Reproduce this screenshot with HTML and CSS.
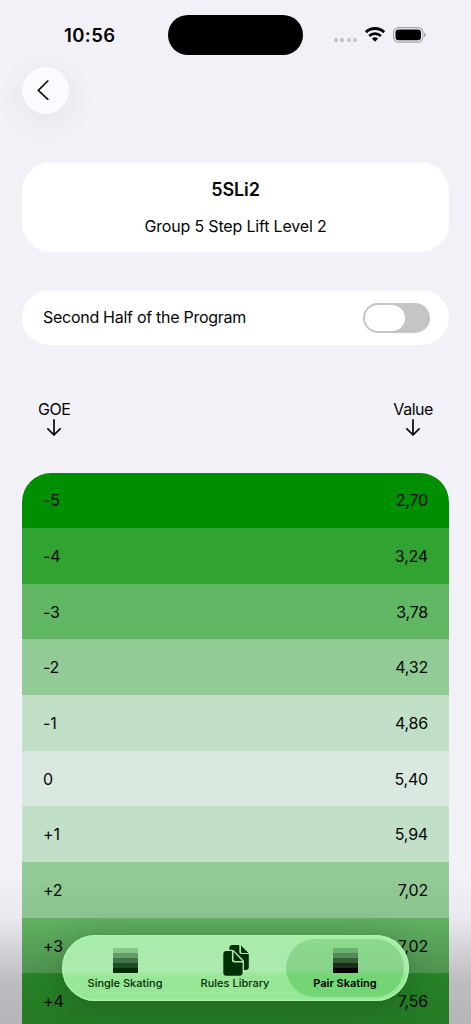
FILE: index.html
```html
<!DOCTYPE html>
<html lang="en">
<head>
<meta charset="utf-8">
<title>5SLi2</title>
<link rel="stylesheet" href="styles.css">
</head>
<body>
<div class="screen">
  <header class="status">
    <span class="time">10:56</span>
    <span class="island"></span>
    <span class="indicators">
      <span class="signal"><i></i><i></i><i></i><i></i></span>
      <svg class="wifi" viewBox="0 0 20 15" width="20" height="15"><g fill="none" stroke="#000" stroke-width="2.8"><path d="M.9 5.2a13.1 13.1 0 0 1 18.2 0"/><path d="M4.2 8.9a8.3 8.3 0 0 1 11.6 0"/></g><path d="M6.9 11.6a4.5 4.5 0 0 1 6.2 0L10 14.8z"/></svg>
      <svg class="battery" viewBox="0 0 33 16" width="33" height="16"><rect x=".6" y=".6" width="29.3" height="14.5" rx="4.8" fill="none" stroke="#a2a2a6" stroke-width="1.1"/><rect x="2.5" y="2.5" width="25.500" height="10.7" rx="3.2"/><path d="M31.200 5.4c2.100.7 2.100 4.100 0 4.800z" fill="#99999d"/></svg>
    </span>
  </header>
  <button class="back" aria-label="Back"><svg viewBox="0 0 12 20" width="12" height="20"><path d="M10.8 1 1.300 10.300l9.500 9" fill="none" stroke="#111" stroke-width="1.700" stroke-linecap="round" stroke-linejoin="round"/></svg></button>
  <section class="card summary">
    <h1>5SLi2</h1>
    <p>Group 5 Step Lift Level 2</p>
  </section>
  <section class="card option">
    <span class="option-label">Second Half of the Program</span>
    <span class="toggle"><span class="knob"></span></span>
  </section>
  <div class="columns">
    <div class="column"><span class="goe-label">GOE</span><svg viewBox="0 0 14 17" width="14" height="17"><path d="M7 .9v15M.9 9.900l6.100 6.100 6.100-6.100"/></svg></div>
    <div class="column"><span class="value-label">Value</span><svg viewBox="0 0 14 17" width="14" height="17"><path d="M7 .9v15M.9 9.900l6.100 6.100 6.100-6.100"/></svg></div>
  </div>
  <section class="table">
    <div class="row g5"><span>-5</span><span>2,70</span></div>
    <div class="row g4"><span>-4</span><span>3,24</span></div>
    <div class="row g3"><span>-3</span><span>3,78</span></div>
    <div class="row g2"><span>-2</span><span>4,32</span></div>
    <div class="row g1"><span>-1</span><span>4,86</span></div>
    <div class="row g0"><span>0</span><span>5,40</span></div>
    <div class="row g1"><span>+1</span><span>5,94</span></div>
    <div class="row g2"><span>+2</span><span>7,02</span></div>
    <div class="row g3"><span>+3</span><span>7,02</span></div>
    <div class="row g5s"><span>+4</span><span>7,56</span></div>
  </section>
  <div class="fade"></div>
  <nav class="tabs">
    <a class="tab"><span class="bars green"><i></i><i></i><i></i><i></i><i></i></span><span class="tab-label">Single Skating</span></a>
    <a class="tab"><svg class="docs" viewBox="0 0 26 31" width="26" height="31"><path d="M9.500 0h6.800v6.500q0 2.500 2.500 2.500h7v13q0 3-3 3H21v-8.500q0-1-.8-1.800L11 5.500q-.8-.7-2-.7H6.300V3q0-3 3.200-3z"/><path d="M18 .4 25.500 8h-6q-1.500 0-1.500-1.500z"/><path d="M3.300 6.100h5.600v9q0 2.500 2.500 2.500h8.200v10q0 3.200-3.200 3.200H3.300q-3 0-3-3.200V9.300q0-3.200 3-3.200z"/><path d="M10.500 6.700 19.200 16h-7q-1.700 0-1.700-1.700z"/></svg><span class="tab-label">Rules Library</span></a>
    <a class="tab active"><span class="bars"><i></i><i></i><i></i><i></i><i></i></span><span class="tab-label">Pair Skating</span></a>
  </nav>
</div>
</body>
</html>
```
FILE: styles.css
```css
* { box-sizing: border-box; }
body { margin: 0; background: #f2f1f7; color: #060606; font: 16px/20px Inter, "Liberation Sans", sans-serif; }
.screen { position: relative; width: 471px; height: 1024px; overflow: hidden; display: flex; flex-direction: column; }
.status { display: grid; grid-template-columns: 168.400px 134.200px 1fr; height: 66.500px; padding-top: 15px; flex: none; }
.time { height: 40px; padding: 10px 0 0 64px; font-size: 18.500px; font-weight: 600; letter-spacing: .4px; color: #000; }
.island { height: 39.500px; border-radius: 20px; background: #000; }
.indicators { display: flex; padding: 12px 0 0 31.400px; height: 40px; align-items: flex-start; }
.signal { display: flex; gap: 2.400px; padding-top: 11px; margin-right: 8px; }
.signal i { width: 4px; height: 4px; border-radius: 1.500px; background: #c5c5ca; }
.wifi { margin-right: 8.300px; }
.back { flex: none; width: 47.500px; height: 47.500px; margin: 0 0 0 21.600px; padding: 0 4px 0 0; display: flex; align-items: center; justify-content: center; border: 0; border-radius: 50%; background: #fafaff; box-shadow: 0 8px 34px rgba(0,0,0,.065); }
.card { flex: none; margin: 0 22px; background: #fff; }
.summary { height: 90px; margin-top: 48px; padding-top: 17px; border-radius: 29px; text-align: center; }
h1 { margin: 0; font-size: 18px; line-height: 21px; font-weight: 600; letter-spacing: -.1px; }
p { margin: 16.400px 0 0; letter-spacing: -.18px; }
.option { height: 55px; margin-top: 38px; padding: 0 19px 0 21px; border-radius: 28px; display: flex; align-items: center; justify-content: space-between; }
.option-label { padding-bottom: 1px; letter-spacing: -.28px; }
.toggle { width: 67.500px; height: 30px; padding: 2px; border-radius: 15px; background: #c5c5c7; }
.knob { display: block; width: 40px; height: 26px; border-radius: 13px; background: #fff; }
.columns { flex: none; height: 127.500px; padding: 53.500px 38px 0; display: flex; justify-content: space-between; }
.column { display: flex; flex-direction: column; align-items: center; }
.column svg { fill: none; stroke: #080808; stroke-width: 1.700; stroke-linecap: round; stroke-linejoin: round; }
.goe-label { letter-spacing: -.45px; }
.value-label { letter-spacing: -.45px; }
.table { flex: none; margin: 0 22px; border-radius: 29px 29px 0 0; overflow: hidden; }
.row { height: 55.670px; padding: 0 21px; display: flex; align-items: center; justify-content: space-between; letter-spacing: -.2px; }
.g5 { background: #008f00; }
.g4, .g5s { background: #31a331; }
.g3 { background: #62b764; }
.g2 { background: #92cb96; }
.g1 { background: #c2dfc7; }
.g0 { background: #dae9df; }
.fade { position: absolute; inset: 872px 0 0; background: linear-gradient(rgba(0,0,0,0), rgba(0,0,0,.035) 30%, rgba(0,0,0,.22) 72%, rgba(0,0,0,.25)); }
.tabs { position: absolute; left: 62px; top: 935px; width: 347px; height: 66px; padding: 4px; border-radius: 33px; display: flex; background: linear-gradient(#a8edaa 0, #abeaae 54%, #97e797 62%, #97e797); box-shadow: inset 0 0 0 1.300px #aaf5ac, 0 5px 32px rgba(0,0,0,.2); }
.tab { width: 118px; margin-right: -8px; border-radius: 29px; display: flex; flex-direction: column; align-items: center; padding-top: 9px; color: #062e08; }
.tab:last-child { margin-right: 0; }
.tab.active { color: #000; background: linear-gradient(#89da8b, #8ad48e 50%, #73d573 64%, #73d573); }
.bars { width: 25px; height: 25px; flex: none; display: grid; grid-template-rows: repeat(5, 1fr); }
.bars i { background: #6db170; }
.bars i:nth-child(2) { background: #528d55; }
.bars i:nth-child(3) { background: #365d38; }
.bars i:nth-child(4) { background: #1b2d1d; }
.bars i:nth-child(5) { background: #000; }
.green i { background: #87c58a; }
.green i:nth-child(2) { background: #689b6a; }
.green i:nth-child(3) { background: #42724a; }
.green i:nth-child(4) { background: #1d4c21; }
.green i:nth-child(5) { background: #002a00; }
.docs { flex: none; margin: -3.500px 0 -2.500px 1px; fill: #002f05; }
.tab-label { margin-top: 3px; font-size: 11px; line-height: 14px; font-weight: 500; letter-spacing: 0; white-space: nowrap; }
.active .tab-label { font-weight: 600; }
```
